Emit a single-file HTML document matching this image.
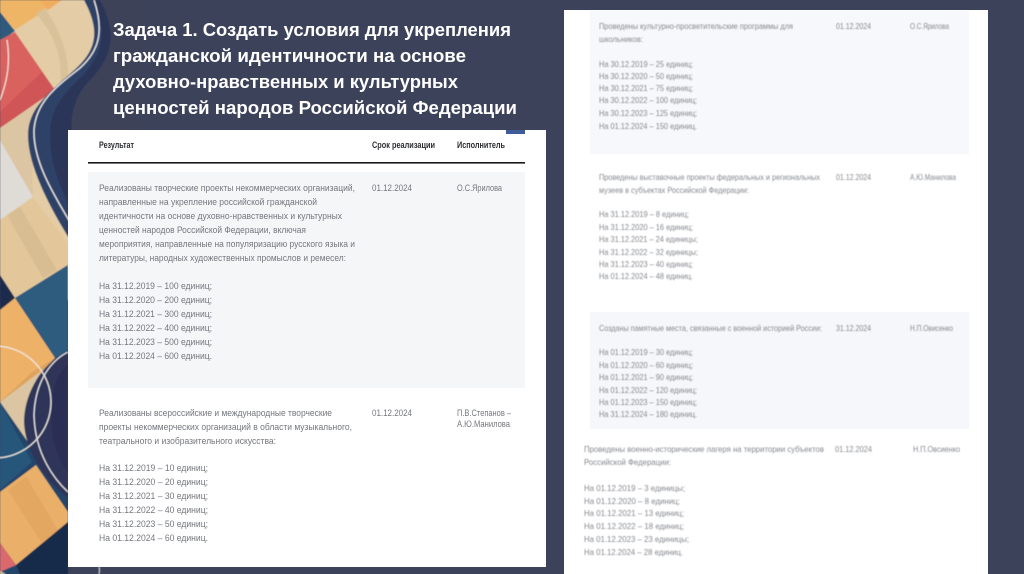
<!DOCTYPE html>
<html lang="ru"><head><meta charset="utf-8"><title>Задача 1</title>
<style>
html,body{margin:0;padding:0;width:1024px;height:574px;overflow:hidden;background:#3c4259}
svg{display:block}
text{font-family:"Liberation Sans",sans-serif}
.t text{font-size:18.5px;font-weight:700;fill:#fff}
.h text{font-size:8.8px;font-weight:700;fill:#2c2d32}
.a text{font-size:9px;fill:#74777e}
.b text{font-size:8.6px;fill:#85888f}
</style></head><body>
<svg width="1024" height="574" viewBox="0 0 1024 574" xmlns="http://www.w3.org/2000/svg">
<rect width="1024" height="574" fill="#3c4259"/>
<defs><filter id="s"><feGaussianBlur stdDeviation="0.5"/></filter><filter id="tt"><feGaussianBlur stdDeviation="0.2"/></filter><filter id="tb"><feGaussianBlur stdDeviation="0.3"/></filter><filter id="tb2"><feGaussianBlur stdDeviation="0.45"/></filter></defs>
<g filter="url(#s)">
<!-- upper art -->
<rect x="0" y="0" width="110" height="300" fill="#e4cda6"/>
<polygon points="0,12 15,30 62,0 0,0" fill="#efb566"/>
<polygon points="40,0 62,0 48,10" fill="#f0ac5e"/>
<polygon points="0,12 15,31 0,42" fill="#2e5a7c"/>
<polygon points="15,32 55,90 0,128 0,40" fill="#d9625f"/>
<polygon points="42,72 55,90 0,128 0,112" fill="#cf5457"/>
<path d="M45,8 Q70,45 68,80 L60,88 Q65,45 36,14Z" fill="#d9c19a"/>
<path d="M0,128 L55,92 L36,125 L32,170 L33,197 L0,220Z" fill="#dcc5a2"/>
<polygon points="0,140 33,197 0,220" fill="#dfdbd6"/>
<polygon points="0,220 33,197 68,243 68,265 15,298 0,275" fill="#e3c79a"/>
<polygon points="7,215 20,207 57,270 43,278" fill="#d8bd92"/>
<polygon points="15,298 68,265 68,310 15,310" fill="#2f5c7f"/>
<polygon points="0,275 15,298 0,310" fill="#1d2c4c"/>
<path d="M7,40 Q12,70 0,100" fill="none" stroke="#f0e6dc" stroke-width="1.2"/>
<!-- wave -->
<path d="M84,0 C100,30 98,50 72,72 C50,92 28,108 28,135 C28,165 48,205 72,243 L120,243 L120,0Z" fill="#2f4268"/>
<path d="M92,0 C108,30 104,55 80,78 C62,95 50,110 50,135 C50,165 60,190 80,225 L120,225 L120,0Z" fill="#2b3558"/>
<path d="M100,0 C118,34 112,58 90,80 C75,95 70,115 72,132 L140,132 L140,0Z" fill="#3c4259"/>
<path d="M94,0 C104,30 100,50 80,68 C60,84 36,100 34,130 C33,160 52,192 70,222" fill="none" stroke="#ece8e6" stroke-width="1.3"/>
<!-- lower art -->
<rect x="0" y="310" width="68" height="264" fill="#23456a"/>
<polygon points="15,298 68,265 68,350 55,358" fill="#2f5c7f"/>
<polygon points="15,298 55,358 0,402 0,310" fill="#edb268"/>
<polygon points="32,372 55,358 44,370 0,402" fill="#dfa35d"/>
<polygon points="0,402 45,368 40,420 30,445" fill="#dcc5a2"/>
<polygon points="0,402 32,462 0,490" fill="#26567a"/>
<polygon points="36,465 68,512 68,522 16,565 0,543 0,492" fill="#eab06a"/>
<polygon points="8,490 26,476 58,530 42,544" fill="#e4a762"/>
<polygon points="0,543 16,565 0,572" fill="#d9696c"/>
<polygon points="16,565 68,522 68,574 20,574" fill="#16294a"/>
<polygon points="0,571 6,574 0,574" fill="#e4cda6"/>
<path d="M68,352 C45,360 25,390 24,420 C24,450 45,480 68,498Z" fill="#2e3559"/>
<path d="M68,365 C52,375 50,405 52,430 C54,450 60,462 68,472Z" fill="#2a2f55"/>
<circle cx="-5" cy="402" r="56" fill="none" stroke="#efe9e2" stroke-width="1.2"/>
<path d="M68,352 C48,362 35,385 34,415 C35,455 55,480 68,492" fill="none" stroke="#ece8e6" stroke-width="1.2"/>
<path d="M99,567 Q100,570 99,574" stroke="#ddd" stroke-width="1.2" fill="none"/>
</g>
<!-- title -->
<g class="t" filter="url(#tt)">
<text x="113" y="36" textLength="398" lengthAdjust="spacingAndGlyphs">Задача 1. Создать условия для укрепления</text>
<text x="113" y="62" textLength="353" lengthAdjust="spacingAndGlyphs">гражданской идентичности на основе</text>
<text x="113" y="88" textLength="345" lengthAdjust="spacingAndGlyphs">духовно-нравственных и культурных</text>
<text x="113" y="114" textLength="404" lengthAdjust="spacingAndGlyphs">ценностей народов Российской Федерации</text>
</g>
<!-- left panel -->
<rect x="68" y="130" width="478" height="437" fill="#fff"/>
<rect x="506" y="130" width="19" height="4" fill="#3f5b99"/>
<rect x="88" y="162" width="437" height="1.6" fill="#17181c"/>
<rect x="88" y="172" width="437" height="216" fill="#f5f6f8"/>
<g filter="url(#tb)">
<g class="h">
<text x="99" y="148" textLength="35" lengthAdjust="spacingAndGlyphs">Результат</text>
<text x="372" y="148" textLength="63" lengthAdjust="spacingAndGlyphs">Срок реализации</text>
<text x="457" y="148" textLength="48" lengthAdjust="spacingAndGlyphs">Исполнитель</text>
</g>
<g class="a">
<text x="99" y="191" textLength="256" lengthAdjust="spacingAndGlyphs">Реализованы творческие проекты некоммерческих организаций,</text>
<text x="99" y="205" textLength="218" lengthAdjust="spacingAndGlyphs">направленные на укрепление российской гражданской</text>
<text x="99" y="219" textLength="243" lengthAdjust="spacingAndGlyphs">идентичности на основе духовно-нравственных и культурных</text>
<text x="99" y="233" textLength="207" lengthAdjust="spacingAndGlyphs">ценностей народов Российской Федерации, включая</text>
<text x="99" y="247" textLength="256" lengthAdjust="spacingAndGlyphs">мероприятия, направленные на популяризацию русского языка и</text>
<text x="99" y="261" textLength="247" lengthAdjust="spacingAndGlyphs">литературы, народных художественных промыслов и ремесел:</text>
<text x="99" y="289" textLength="113" lengthAdjust="spacingAndGlyphs">На 31.12.2019 – 100 единиц;</text>
<text x="99" y="303" textLength="113" lengthAdjust="spacingAndGlyphs">На 31.12.2020 – 200 единиц;</text>
<text x="99" y="317" textLength="113" lengthAdjust="spacingAndGlyphs">На 31.12.2021 – 300 единиц;</text>
<text x="99" y="331" textLength="113" lengthAdjust="spacingAndGlyphs">На 31.12.2022 – 400 единиц;</text>
<text x="99" y="345" textLength="113" lengthAdjust="spacingAndGlyphs">На 31.12.2023 – 500 единиц;</text>
<text x="99" y="359" textLength="113" lengthAdjust="spacingAndGlyphs">На 01.12.2024 – 600 единиц.</text>
<text x="372" y="191" textLength="40" lengthAdjust="spacingAndGlyphs">01.12.2024</text>
<text x="457" y="191" textLength="45" lengthAdjust="spacingAndGlyphs">О.С.Ярилова</text>
<text x="99" y="416" textLength="233" lengthAdjust="spacingAndGlyphs">Реализованы всероссийские и международные творческие</text>
<text x="99" y="430" textLength="253" lengthAdjust="spacingAndGlyphs">проекты некоммерческих организаций в области музыкального,</text>
<text x="99" y="444" textLength="177" lengthAdjust="spacingAndGlyphs">театрального и изобразительного искусства:</text>
<text x="372" y="416" textLength="40" lengthAdjust="spacingAndGlyphs">01.12.2024</text>
<text x="457" y="416" textLength="54" lengthAdjust="spacingAndGlyphs">П.В.Степанов –</text>
<text x="457" y="427" textLength="53" lengthAdjust="spacingAndGlyphs">А.Ю.Манилова</text>
<text x="99" y="471" textLength="109" lengthAdjust="spacingAndGlyphs">На 31.12.2019 – 10 единиц;</text>
<text x="99" y="485" textLength="109" lengthAdjust="spacingAndGlyphs">На 31.12.2020 – 20 единиц;</text>
<text x="99" y="499" textLength="109" lengthAdjust="spacingAndGlyphs">На 31.12.2021 – 30 единиц;</text>
<text x="99" y="513" textLength="109" lengthAdjust="spacingAndGlyphs">На 31.12.2022 – 40 единиц;</text>
<text x="99" y="527" textLength="109" lengthAdjust="spacingAndGlyphs">На 31.12.2023 – 50 единиц;</text>
<text x="99" y="541" textLength="109" lengthAdjust="spacingAndGlyphs">На 01.12.2024 – 60 единиц.</text>
</g>
</g>
<!-- right panel -->
<rect x="564" y="10" width="424" height="564" fill="#fff"/>
<rect x="590" y="11" width="379" height="143" fill="#f6f8fb"/>
<rect x="590" y="312" width="379" height="117" fill="#f5f7fa"/>
<g class="b" filter="url(#tb2)">
<text x="599" y="29" textLength="194" lengthAdjust="spacingAndGlyphs">Проведены культурно-просветительские программы для</text>
<text x="599" y="42" textLength="44" lengthAdjust="spacingAndGlyphs">школьников:</text>
<text x="599" y="67" textLength="94" lengthAdjust="spacingAndGlyphs">На 30.12.2019 – 25 единиц;</text>
<text x="599" y="79" textLength="94" lengthAdjust="spacingAndGlyphs">На 30.12.2020 – 50 единиц;</text>
<text x="599" y="91" textLength="94" lengthAdjust="spacingAndGlyphs">На 30.12.2021 – 75 единиц;</text>
<text x="599" y="103" textLength="98" lengthAdjust="spacingAndGlyphs">На 30.12.2022 – 100 единиц;</text>
<text x="599" y="116" textLength="98" lengthAdjust="spacingAndGlyphs">На 30.12.2023 – 125 единиц;</text>
<text x="599" y="129" textLength="98" lengthAdjust="spacingAndGlyphs">На 01.12.2024 – 150 единиц.</text>
<text x="836" y="29" textLength="35" lengthAdjust="spacingAndGlyphs">01.12.2024</text>
<text x="910" y="29" textLength="39" lengthAdjust="spacingAndGlyphs">О.С.Ярилова</text>
<text x="599" y="180" textLength="221" lengthAdjust="spacingAndGlyphs">Проведены выставочные проекты федеральных и региональных</text>
<text x="599" y="193" textLength="150" lengthAdjust="spacingAndGlyphs">музеев в субъектах Российской Федерации:</text>
<text x="599" y="217" textLength="90" lengthAdjust="spacingAndGlyphs">На 31.12.2019 – 8 единиц;</text>
<text x="599" y="230" textLength="94" lengthAdjust="spacingAndGlyphs">На 31.12.2020 – 16 единиц;</text>
<text x="599" y="242" textLength="99" lengthAdjust="spacingAndGlyphs">На 31.12.2021 – 24 единицы;</text>
<text x="599" y="255" textLength="99" lengthAdjust="spacingAndGlyphs">На 31.12.2022 – 32 единицы;</text>
<text x="599" y="267" textLength="94" lengthAdjust="spacingAndGlyphs">На 31.12.2023 – 40 единиц;</text>
<text x="599" y="279" textLength="94" lengthAdjust="spacingAndGlyphs">На 01.12.2024 – 48 единиц.</text>
<text x="836" y="180" textLength="35" lengthAdjust="spacingAndGlyphs">01.12.2024</text>
<text x="910" y="180" textLength="46" lengthAdjust="spacingAndGlyphs">А.Ю.Манилова</text>
<text x="599" y="331" textLength="223" lengthAdjust="spacingAndGlyphs">Созданы памятные места, связанные с военной историей России:</text>
<text x="599" y="355" textLength="94" lengthAdjust="spacingAndGlyphs">На 01.12.2019 – 30 единиц;</text>
<text x="599" y="368" textLength="94" lengthAdjust="spacingAndGlyphs">На 01.12.2020 – 60 единиц;</text>
<text x="599" y="380" textLength="94" lengthAdjust="spacingAndGlyphs">На 01.12.2021 – 90 единиц;</text>
<text x="599" y="393" textLength="98" lengthAdjust="spacingAndGlyphs">На 01.12.2022 – 120 единиц;</text>
<text x="599" y="405" textLength="98" lengthAdjust="spacingAndGlyphs">На 01.12.2023 – 150 единиц;</text>
<text x="599" y="417" textLength="98" lengthAdjust="spacingAndGlyphs">На 31.12.2024 – 180 единиц.</text>
<text x="836" y="331" textLength="35" lengthAdjust="spacingAndGlyphs">31.12.2024</text>
<text x="910" y="331" textLength="43" lengthAdjust="spacingAndGlyphs">Н.П.Овисенко</text>
<text x="584" y="452" textLength="240" lengthAdjust="spacingAndGlyphs">Проведены военно-исторические лагеря на территории субъектов</text>
<text x="584" y="465" textLength="87" lengthAdjust="spacingAndGlyphs">Российской Федерации:</text>
<text x="584" y="491" textLength="101" lengthAdjust="spacingAndGlyphs">На 01.12.2019 – 3 единицы;</text>
<text x="584" y="504" textLength="96" lengthAdjust="spacingAndGlyphs">На 01.12.2020 – 8 единиц;</text>
<text x="584" y="516" textLength="100" lengthAdjust="spacingAndGlyphs">На 01.12.2021 – 13 единиц;</text>
<text x="584" y="529" textLength="100" lengthAdjust="spacingAndGlyphs">На 01.12.2022 – 18 единиц;</text>
<text x="584" y="542" textLength="105" lengthAdjust="spacingAndGlyphs">На 01.12.2023 – 23 единицы;</text>
<text x="584" y="555" textLength="99" lengthAdjust="spacingAndGlyphs">На 01.12.2024 – 28 единиц.</text>
<text x="835" y="452" textLength="37" lengthAdjust="spacingAndGlyphs">01.12.2024</text>
<text x="913" y="452" textLength="47" lengthAdjust="spacingAndGlyphs">Н.П.Овсиенко</text>
</g>
</svg>
</body></html>
